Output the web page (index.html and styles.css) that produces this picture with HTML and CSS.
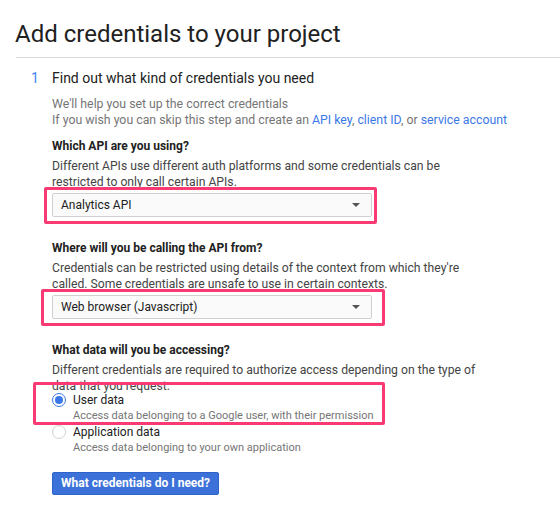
FILE: index.html
```html
<!DOCTYPE html>
<html lang="en">
<head>
<meta charset="utf-8">
<title>Add credentials to your project</title>
<link rel="stylesheet" href="styles.css">
</head>
<body>
<div class="page">
  <header class="head">
    <h1 class="title">Add credentials to your project</h1>
  </header>
  <section class="step">
    <div class="step-title"><span class="num">1</span><span class="step-name">Find out what kind of credentials you need</span></div>
    <div class="step-body">
      <p class="intro">We'll help you set up the correct credentials<br>If you wish you can skip this step and create an <a href="#" class="link">API key</a>, <a href="#" class="link">client ID</a>, or <a href="#" class="link">service account</a></p>

      <div class="field field-first">
        <h3 class="label">Which API are you using?</h3>
        <p class="desc">Different APIs use different auth platforms and some credentials can be<br>restricted to only call certain APIs.</p>
        <div class="select-wrap">
          <div class="select"><span class="select-text">Analytics API</span><span class="caret"></span></div>
          <span class="hl hl-1"></span>
        </div>
      </div>

      <div class="field">
        <h3 class="label">Where will you be calling the API from?</h3>
        <p class="desc">Credentials can be restricted using details of the context from which they're<br>called. Some credentials are unsafe to use in certain contexts.</p>
        <div class="select-wrap">
          <div class="select"><span class="select-text">Web browser (Javascript)</span><span class="caret"></span></div>
          <span class="hl hl-2"></span>
        </div>
      </div>

      <div class="field">
        <h3 class="label">What data will you be accessing?</h3>
        <p class="desc">Different credentials are required to authorize access depending on the type of<br>data that you request.</p>
        <div class="options">
          <div class="option">
            <span class="radio radio-on"></span>
            <div class="option-text">
              <div class="option-label">User data</div>
              <div class="option-sub">Access data belonging to a Google user, with their permission</div>
            </div>
          </div>
          <div class="option">
            <span class="radio"></span>
            <div class="option-text">
              <div class="option-label">Application data</div>
              <div class="option-sub">Access data belonging to your own application</div>
            </div>
          </div>
          <span class="hl hl-3"></span>
        </div>
      </div>

      <button class="btn" type="button">What credentials do I need?</button>
    </div>
  </section>
</div>
</body>
</html>
```

FILE: styles.css
```css
* { box-sizing: border-box; }

html, body {
  margin: 0;
  padding: 0;
  background: #ffffff;
}

body {
  font-family: Roboto, "Liberation Sans", Arial, sans-serif;
  color: #212121;
}

.page {
  width: 560px;
  height: 516px;
  overflow: hidden;
}

.head {
  margin-left: 16px;
  padding-top: 18px;
  padding-bottom: 7px;
  border-bottom: 1px solid #d9d9d9;
}

.title {
  margin: 0 0 0 -1px;
  font-size: 24px;
  line-height: 32px;
  font-weight: 400;
  color: #212121;
}

.step {
  padding: 10px 0 0 31px;
}

.step-title {
  display: flex;
  font-size: 14px;
  line-height: 20px;
  color: #212121;
}

.num {
  width: 21px;
  color: #4285f4;
}

.step-body {
  margin-left: 21px;
}

.intro {
  margin: 8px 0 0;
  font-size: 12.3px;
  line-height: 16px;
  color: #757575;
}

.link {
  color: #3b78e7;
  text-decoration: none;
}

.field {
  margin-top: 23px;
}

.field-first {
  margin-top: 10px;
}

.label {
  margin: 0;
  font-size: 12px;
  line-height: 16px;
  font-weight: 700;
  color: #212121;
}

.desc {
  margin: 4px 0 0;
  font-size: 12.2px;
  line-height: 16px;
  color: #444444;
  white-space: nowrap;
}

.select-wrap {
  position: relative;
  margin-top: 3px;
  width: 320px;
}

.select {
  display: flex;
  align-items: center;
  justify-content: space-between;
  height: 24px;
  padding: 0 8px;
  border: 1px solid #d0d0d0;
  border-radius: 2px;
  background: #fafafa;
  font-size: 12px;
  color: #212121;
}

.caret {
  width: 0;
  height: 0;
  margin-right: 3px;
  border-left: 4px solid transparent;
  border-right: 4px solid transparent;
  border-top: 4px solid #555555;
}

.hl {
  position: absolute;
  border: 3px solid #f93a73;
  border-radius: 2px;
  pointer-events: none;
}

.hl-1 {
  left: -8px;
  top: -6px;
  width: 333px;
  height: 37px;
}

.hl-2 {
  left: -11px;
  top: -6px;
  width: 344px;
  height: 37px;
}

.options {
  position: relative;
  margin-top: -2px;
}

.option {
  display: flex;
  align-items: flex-start;
}

.radio {
  flex: none;
  width: 14px;
  height: 14px;
  margin-top: 1px;
  margin-right: 7px;
  border: 1px solid #d3d3d3;
  border-radius: 50%;
  background: #ffffff;
  display: flex;
  align-items: center;
  justify-content: center;
}

.radio-on {
  border: 1.5px solid #3b78e7;
}

.radio-on::after {
  content: "";
  width: 8px;
  height: 8px;
  border-radius: 50%;
  background: #3b78e7;
}

.option-label {
  font-size: 12px;
  line-height: 16px;
  color: #212121;
}

.option-sub {
  font-size: 11px;
  line-height: 16px;
  color: #757575;
}

.hl-3 {
  left: -19px;
  top: -10px;
  width: 352px;
  height: 43px;
}

.btn {
  display: block;
  margin-top: 16px;
  height: 23px;
  padding: 0 8px;
  border: 1px solid #2f63c9;
  border-radius: 2px;
  background: #3b71d9;
  color: #ffffff;
  font-family: Roboto, "Liberation Sans", Arial, sans-serif;
  font-size: 12px;
  font-weight: 700;
  line-height: 21px;
}
```
